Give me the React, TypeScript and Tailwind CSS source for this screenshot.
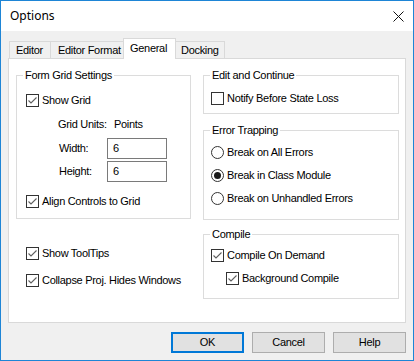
import React from "react";

function Check({ checked = true }: { checked?: boolean }) {
  return (
    <span className="w-[13px] h-[13px] border border-[#333333] bg-white flex items-center justify-center shrink-0">
      {checked && (
        <svg width="11" height="11" viewBox="0 0 11 11">
          <polyline points="1.5,5.5 4,8 9.5,2.5" fill="none" stroke="#5f5f5f" strokeWidth="1.1" />
        </svg>
      )}
    </span>
  );
}

function Radio({ on = false }: { on?: boolean }) {
  return (
    <span className="w-[13px] h-[13px] rounded-full border border-[#333333] bg-white flex items-center justify-center shrink-0">
      {on && <span className="w-[7px] h-[7px] rounded-full bg-[#1a1a1a]" />}
    </span>
  );
}

function Group({
  title,
  className,
  children,
}: {
  title: string;
  className: string;
  children: React.ReactNode;
}) {
  return (
    <fieldset className={"border border-[#dcdcdc] pl-[6px] pr-2 " + className}>
      <legend className="px-[2px] leading-[13px]">{title}</legend>
      {children}
    </fieldset>
  );
}

export default function App() {
  return (
    <div className="w-[414px] h-[361px] border border-[#1e85d6] bg-[#f0f0f0] flex flex-col text-[11px] tracking-[-0.3px] whitespace-nowrap text-black font-['Liberation_Sans',Arial,sans-serif]">
      {/* title bar */}
      <div className="h-[30px] bg-white flex items-center justify-between pl-[9px] pr-[9px]">
        <span className="text-[12px] tracking-normal font-['Noto_Sans',sans-serif]">Options</span>
        <svg width="11" height="11" viewBox="0 0 11 11">
          <line x1="0.5" y1="0.5" x2="10.5" y2="10.5" stroke="#111" strokeWidth="1" />
          <line x1="10.5" y1="0.5" x2="0.5" y2="10.5" stroke="#111" strokeWidth="1" />
        </svg>
      </div>

      <div className="flex-1 pl-[7px] pr-[7px] pt-[7px] flex flex-col">
        {/* tabs */}
        <div className="h-[20px] flex items-end pl-px">
          <div className="w-[42px] h-[17px] border border-b-0 border-[#d9d9d9] flex items-center pl-[6px]">Editor</div>
          <div className="w-[74px] h-[17px] -ml-px border border-b-0 border-[#d9d9d9] flex items-center pl-[7px]">Editor Format</div>
          <div className="w-[53px] h-[21px] -ml-px -mb-px relative z-10 bg-white border border-b-0 border-[#d9d9d9] flex items-center pl-[6px] pb-[2px]">General</div>
          <div className="w-[50px] h-[17px] -ml-px border border-b-0 border-[#d9d9d9] flex items-center pl-[5px]">Docking</div>
        </div>

        {/* panel */}
        <div className="h-[265px] w-[398px] bg-white border border-[#d9d9d9] flex pl-[7px] pt-[10px]">
          {/* left column */}
          <div className="w-[175px] flex flex-col">
            <Group title="Form Grid Settings" className="h-[150px] w-[175px]">
              <div className="h-[20px] mt-[8px] ml-[3px] flex items-center gap-[3px]">
                <Check />
                <span>Show Grid</span>
              </div>
              <div className="h-[20px] mt-[4px] ml-[35px] flex items-center">
                <span className="w-[56px]">Grid Units:</span>
                <span>Points</span>
              </div>
              <div className="h-[21px] mt-[4px] ml-[36px] flex items-center">
                <span className="w-[48px]">Width:</span>
                <span className="w-[60px] h-[21px] border border-[#7a7a7a] bg-white flex items-center pl-[5px]">6</span>
              </div>
              <div className="h-[21px] mt-[2px] ml-[36px] flex items-center">
                <span className="w-[48px]">Height:</span>
                <span className="w-[60px] h-[21px] border border-[#7a7a7a] bg-white flex items-center pl-[5px]">6</span>
              </div>
              <div className="h-[20px] mt-[9px] ml-[3px] flex items-center gap-[3px]">
                <Check />
                <span>Align Controls to Grid</span>
              </div>
            </Group>
            <div className="h-[20px] mt-[24px] ml-[10px] flex items-center gap-[3px]">
              <Check />
              <span>Show ToolTips</span>
            </div>
            <div className="h-[20px] mt-[7px] ml-[10px] flex items-center gap-[3px]">
              <Check />
              <span>Collapse Proj. Hides Windows</span>
            </div>
          </div>

          {/* right column */}
          <div className="w-[196px] ml-[12px] flex flex-col">
            <Group title="Edit and Continue" className="h-[45px] w-[196px]">
              <div className="h-[20px] mt-[6px] ml-[1px] flex items-center gap-[3px]">
                <Check checked={false} />
                <span>Notify Before State Loss</span>
              </div>
            </Group>
            <Group title="Error Trapping" className="h-[96px] w-[196px] mt-[10px]">
              <div className="mt-[4px] ml-[1px] flex flex-col">
                <div className="h-[23px] flex items-center gap-[3px]">
                  <Radio />
                  <span>Break on All Errors</span>
                </div>
                <div className="h-[23px] flex items-center gap-[3px]">
                  <Radio on />
                  <span>Break in Class Module</span>
                </div>
                <div className="h-[23px] flex items-center gap-[3px]">
                  <Radio />
                  <span>Break on Unhandled Errors</span>
                </div>
              </div>
            </Group>
            <Group title="Compile" className="h-[71px] w-[196px] mt-[8px]">
              <div className="mt-[3px] ml-[1px] flex flex-col">
                <div className="h-[23px] flex items-center gap-[3px]">
                  <Check />
                  <span>Compile On Demand</span>
                </div>
                <div className="h-[23px] ml-[15px] flex items-center gap-[3px]">
                  <Check />
                  <span>Background Compile</span>
                </div>
              </div>
            </Group>
          </div>
        </div>

        {/* buttons */}
        <div className="mt-[9px] flex justify-end gap-[8px]">
          <button className="w-[73px] h-[21px] border-2 border-[#0078d7] bg-[#e1e1e1] flex items-center justify-center">OK</button>
          <button className="w-[73px] h-[21px] border border-[#adadad] bg-[#e1e1e1] flex items-center justify-center">Cancel</button>
          <button className="w-[73px] h-[21px] border border-[#adadad] bg-[#e1e1e1] flex items-center justify-center">Help</button>
        </div>
      </div>
    </div>
  );
}
